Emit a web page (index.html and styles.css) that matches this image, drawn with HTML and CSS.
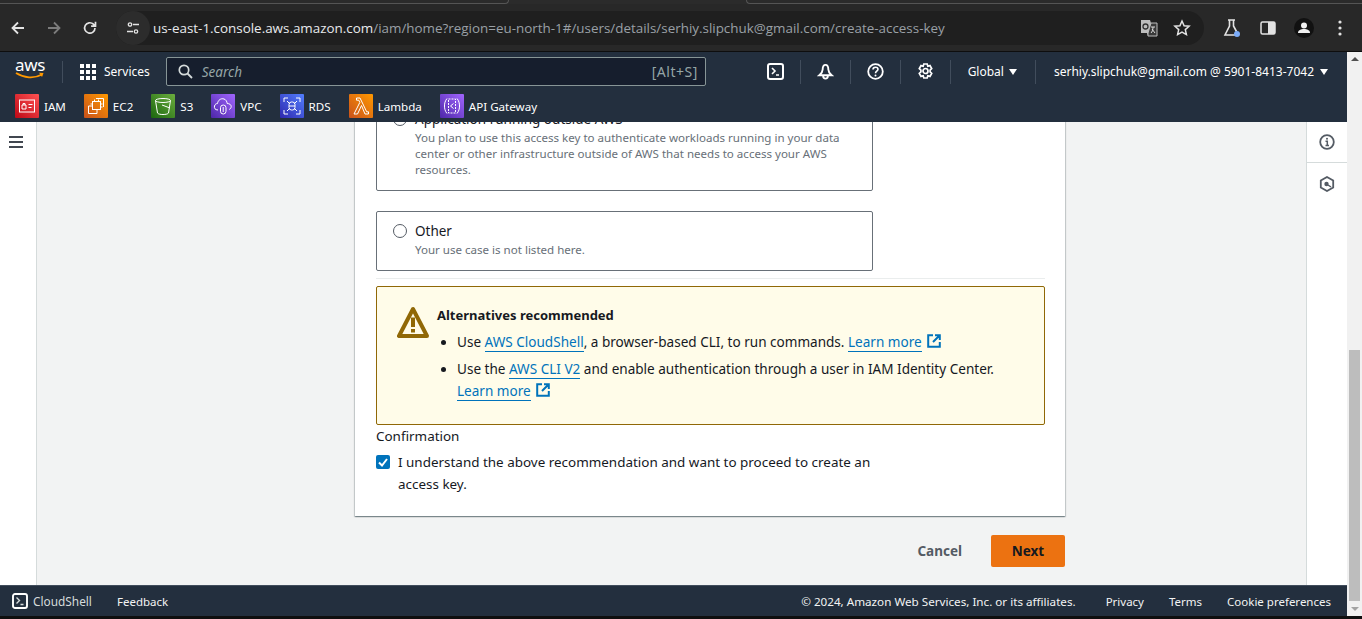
FILE: index.html
```html
<!DOCTYPE html>
<html lang="en">
<head>
  <meta charset="UTF-8">
  <title>Create access key</title>
  <link rel="stylesheet" href="styles.css">
</head>
<body>
  <header class="browser">
    <div class="tab-strip">
      <div class="tab-left"></div>
      <div class="tab-active"></div>
      <div class="tab-right"></div>
    </div>
    <div class="toolbar">
      <svg width="16" height="16" viewBox="0 0 16 16"><path d="M14 8H3M8 2.5 2.5 8 8 13.5" fill="none" stroke="#e3e3e3" stroke-width="1.8"/></svg>
      <svg width="16" height="16" viewBox="0 0 16 16"><path d="M2 8h11M8 2.5 13.5 8 8 13.5" fill="none" stroke="#7c7c7c" stroke-width="1.8"/></svg>
      <svg width="16" height="16" viewBox="0 0 16 16"><path d="M13 8a5.2 5.2 0 1 1-1.6-3.8L13 6M13.5 1.8V6.2H9.1" fill="none" stroke="#e3e3e3" stroke-width="1.7"/></svg>
      <div class="omnibox">
        <span class="site-chip">
          <svg width="16" height="16" viewBox="0 0 16 16"><g fill="none" stroke="#e3e3e3" stroke-width="1.3"><circle cx="5" cy="4.5" r="1.7"/><path d="M8 4.5h6M2 11.500h6"/><circle cx="11" cy="11.5" r="1.7"/></g></svg>
        </span>
        <span class="url"><b>us-east-1.console.aws.amazon.com</b>/iam/home?region=eu-north-1#/users/details/serhiy.slipchuk@gmail.com/create-access-key</span>
        <svg class="translate" width="18" height="18" viewBox="0 0 18 18"><path d="M1 1h9l1 3h6v13H8l-1-3H1z" fill="#bdbdbd"/><path d="M8 14l3-10h6v13H8z" fill="#3a3a3a" stroke="#bdbdbd"/><circle cx="5.5" cy="7.5" r="2.5" fill="none" stroke="#333" stroke-width="1.3"/><path d="M11 8h4M13 8c0 3-1 5-2 6M12 10l3 4" fill="none" stroke="#ddd"/></svg>
        <svg width="18" height="18" viewBox="0 0 18 18"><path d="M9 2l2.100 4.700 5 .5-3.800 3.400 1.100 5L9 13l-4.400 2.600 1.100-5L1.900 7.200l5-.5z" fill="none" stroke="#e3e3e3" stroke-width="1.5"/></svg>
      </div>
      <div class="tb-right">
        <svg width="18" height="20" viewBox="0 0 18 20"><path d="M5 2h7M6.500 2v6L2 17h11M10.500 2v6l3 5.500" fill="none" stroke="#e3e3e3" stroke-width="1.6"/><circle cx="14" cy="16" r="3" fill="#7cacf8"/></svg>
        <svg width="16" height="16" viewBox="0 0 16 16"><rect x="1" y="2" width="14" height="12" rx="1.5" fill="none" stroke="#e3e3e3" stroke-width="1.5"/><rect x="8" y="2" width="7" height="12" fill="#e3e3e3"/></svg>
        <svg width="24" height="24" viewBox="0 0 24 24"><circle cx="12" cy="12" r="10" fill="#111"/><circle cx="12" cy="9.5" r="3" fill="#f0f0f0"/><path d="M6 17c0-3 3-4 6-4s6 1 6 4z" fill="#f0f0f0"/></svg>
        <svg width="4" height="16" viewBox="0 0 4 16"><circle cx="2" cy="2" r="1.6" fill="#e3e3e3"/><circle cx="2" cy="8" r="1.6" fill="#e3e3e3"/><circle cx="2" cy="14" r="1.6" fill="#e3e3e3"/></svg>
      </div>
    </div>
  </header>

  <div class="viewport">
    <div class="page">
      <nav class="topnav">
        <div class="nav-row">
          <div class="aws-logo">
            <span class="aws-word">aws</span>
            <svg width="30" height="8" viewBox="0 0 30 8"><path d="M1 1c8 5 18 6 26 1.500" fill="none" stroke="#f90" stroke-width="1.8"/><path d="M24 .8l4.500 .2-1.500 4z" fill="#f90"/></svg>
          </div>
          <span class="nav-sep"></span>
          <div class="services">
            <svg width="16" height="16" viewBox="0 0 16 16" fill="#fff"><rect width="4" height="4"/><rect x="6" width="4" height="4"/><rect x="12" width="4" height="4"/><rect y="6" width="4" height="4"/><rect x="6" y="6" width="4" height="4"/><rect x="12" y="6" width="4" height="4"/><rect y="12" width="4" height="4"/><rect x="6" y="12" width="4" height="4"/><rect x="12" y="12" width="4" height="4"/></svg>
            <span>Services</span>
          </div>
          <div class="search">
            <svg width="15" height="15" viewBox="0 0 15 15"><circle cx="6" cy="6" r="4.7" fill="none" stroke="#d5dbdb" stroke-width="1.7"/><path d="M9.500 9.500l4.500 4.500" stroke="#d5dbdb" stroke-width="1.8"/></svg>
            <span class="search-text">Search</span>
            <span class="search-key">[Alt+S]</span>
          </div>
          <div class="nav-tools">
            <span class="tool">
              <svg width="17" height="17" viewBox="0 0 17 17"><rect x="1" y="1" width="15" height="15" rx="2" fill="none" stroke="#fff" stroke-width="2"/><path d="M5 5l3 3-3 3M9 12h3" fill="none" stroke="#fff" stroke-width="1.6"/></svg>
            </span>
            <span class="tool">
              <svg width="17" height="17" viewBox="0 0 18 18"><path d="M9 2C6.500 2 6 5 6 7c0 3-3.500 6-3.500 6h13S12 10 12 7c0-2-.5-5-3-5zM6.500 13.500c0 2 1 3 2.500 3s2.500-1 2.500-3" fill="none" stroke="#fff" stroke-width="2"/></svg>
            </span>
            <span class="tool">
              <svg width="17" height="17" viewBox="0 0 17 17"><circle cx="8.5" cy="8.5" r="7.3" fill="none" stroke="#fff" stroke-width="1.8"/><path d="M6 6.500c0-1.500 1.200-2.300 2.500-2.300S11 5 11 6.300c0 1.900-2.500 2-2.500 4" fill="none" stroke="#fff" stroke-width="1.6"/><circle cx="8.5" cy="12.5" r="1" fill="#fff"/></svg>
            </span>
            <span class="tool">
              <svg width="17" height="17" viewBox="0 0 17 17"><path d="M6.800 1h3.400l.6 2.200 2.200-.6 1.700 3-1.600 1.600v1.600l1.600 1.600-1.700 3-2.200-.6-.6 2.200H6.800l-.6-2.200-2.200.6-1.700-3 1.600-1.600V7.200L2.300 5.600l1.700-3 2.200.6z" fill="none" stroke="#fff" stroke-width="1.7"/><circle cx="8.5" cy="8" r="2.5" fill="none" stroke="#fff" stroke-width="1.7"/></svg>
            </span>
            <span class="tool tool-text">Global <i class="caret"></i></span>
            <span class="tool tool-text tool-last">serhiy.slipchuk@gmail.com @ 5901-8413-7042 <i class="caret"></i></span>
          </div>
        </div>
        <div class="shortcuts">
          <a class="shortcut"><span class="tile tile-red"><svg viewBox="0 0 24 24"><rect x="4.5" y="6" width="15" height="12" fill="none" stroke="#fff"/><path d="M7 11h4v4H7zM8 11V9.500h2V11M13.500 10.500h4M13.500 13.500h3" fill="none" stroke="#fff"/></svg></span>IAM</a>
          <a class="shortcut"><span class="tile tile-orange"><svg viewBox="0 0 24 24"><rect x="8.500" y="7.500" width="8" height="8" fill="none" stroke="#fff"/><path d="M12 4.500h7.500V13M8.500 12H4.500v7.500H13v-4M10.500 7.500V5.500M14.500 7.500V5.500M16.500 10h2M16.500 13h2M6.500 10h2" fill="none" stroke="#fff"/></svg></span>EC2</a>
          <a class="shortcut"><span class="tile tile-green"><svg viewBox="0 0 24 24"><ellipse cx="12" cy="6.5" rx="7.5" ry="2" fill="none" stroke="#fff"/><path d="M4.500 6.500 6.500 19c1 2 10 2 11 0l2-12.500M11 11l8 3" fill="none" stroke="#fff"/></svg></span>S3</a>
          <a class="shortcut"><span class="tile tile-purple"><svg viewBox="0 0 24 24"><path d="M7 16c-3 0-4-2-3.500-4C4 10 5.500 9.500 6.500 9.500 7 6 10 4 13 5c2 .7 3 2.500 3.200 4.500 2 0 4 1 4 3 0 1.500-1 2.500-2 3" fill="none" stroke="#fff"/><rect x="9.500" y="11" width="5.500" height="9" rx="2.700" fill="none" stroke="#fff"/><path d="M12.200 13v5" stroke="#fff"/></svg></span>VPC</a>
          <a class="shortcut"><span class="tile tile-blue"><svg viewBox="0 0 24 24"><path d="M4 8V4h4M16 4h4v4M4 16v4h4M20 16v4h-4M7 7l3 3M17 7l-3 3M7 17l3-3M17 17l-3-3" fill="none" stroke="#fff"/><rect x="9" y="8" width="6" height="8" rx="2.500" fill="none" stroke="#fff"/><path d="M9 12h6" stroke="#fff"/></svg></span>RDS</a>
          <a class="shortcut"><span class="tile tile-orange"><svg viewBox="0 0 24 24"><path d="M5 20h3.500l4-8.500L16 20h3.500v-2.200h-1.800L11 4H7.500v2.200h2.300l1 2.300z" fill="none" stroke="#fff"/></svg></span>Lambda</a>
          <a class="shortcut"><span class="tile tile-purple"><svg viewBox="0 0 24 24"><path d="M7 4.500C5 7 4.500 9.500 4.500 12s.5 5 2.500 7.500M17 4.500c2 2.500 2.500 5 2.500 7.500s-.5 5-2.500 7.500" fill="none" stroke="#fff"/><rect x="8.500" y="5" width="7" height="14" fill="none" stroke="#fff" stroke-dasharray="2 1"/><path d="M13.500 9.500 10.500 12l3 2.500" fill="none" stroke="#fff"/></svg></span>API Gateway</a>
        </div>
      </nav>

      <div class="app">
        <aside class="side-left">
          <svg width="14" height="12" viewBox="0 0 14 12"><path d="M0 1h14M0 6h14M0 11h14" stroke="#414750" stroke-width="1.8"/></svg>
        </aside>

        <main class="main">
          <section class="card">
            <div class="option">
              <span class="radio"></span>
              <div>
                <div class="opt-title">Application running outside AWS</div>
                <p class="opt-desc">You plan to use this access key to authenticate workloads running in your data center or other infrastructure outside of AWS that needs to access your AWS resources.</p>
              </div>
            </div>
            <div class="option">
              <span class="radio"></span>
              <div>
                <div class="opt-title">Other</div>
                <p class="opt-desc">Your use case is not listed here.</p>
              </div>
            </div>
            <hr class="divider">
            <div class="alert">
              <svg class="alert-icon" width="32" height="32" viewBox="0 0 32 32"><path d="M16 3 2 30h28z" fill="none" stroke="#906806" stroke-width="4" stroke-linejoin="round"/><path d="M14 11.500h4v9.500h-4zM14 23h4v3.500h-4z" fill="#906806"/></svg>
              <div class="alert-body">
                <div class="alert-title">Alternatives recommended</div>
                <ul>
                  <li>Use <a class="link">AWS CloudShell</a>, a browser-based CLI, to run commands. <span class="learn"><a class="link">Learn more</a><svg class="ext" width="14" height="14" viewBox="0 0 14 14"><path d="M6 1.200H1.200v11.600h11.600V8M8 1.200h4.800V6M12.500 1.500 6 8" fill="none" stroke="#0073bb" stroke-width="2"/></svg></span></li>
                  <li>Use the <a class="link">AWS CLI V2</a> and enable authentication through a user in IAM Identity Center. <span class="learn"><a class="link">Learn more</a><svg class="ext" width="14" height="14" viewBox="0 0 14 14"><path d="M6 1.200H1.200v11.600h11.600V8M8 1.200h4.800V6M12.500 1.500 6 8" fill="none" stroke="#0073bb" stroke-width="2"/></svg></span></li>
                </ul>
              </div>
            </div>
            <div class="confirm-label">Confirmation</div>
            <div class="confirm">
              <span class="check"><svg width="14" height="14" viewBox="0 0 14 14"><path d="M3 7.500l3 3 5-6.500" fill="none" stroke="#fff" stroke-width="2"/></svg></span>
              <span class="confirm-text">I understand the above recommendation and want to proceed to create an access key.</span>
            </div>
          </section>
          <div class="actions">
            <a class="btn-cancel">Cancel</a>
            <a class="btn-next">Next</a>
          </div>
        </main>

        <aside class="side-right">
          <div class="rail-item">
            <svg width="16" height="16" viewBox="0 0 16 16"><circle cx="8" cy="8" r="6.800" fill="none" stroke="#545b64" stroke-width="1.8"/><path d="M6.500 7.200H8.300V11.500M6.500 11.500h3.500" fill="none" stroke="#545b64" stroke-width="1.5"/><circle cx="8" cy="4.800" r="1" fill="#545b64"/></svg>
          </div>
          <div class="rail-item">
            <svg width="16" height="16" viewBox="0 0 16 16"><path d="M8 1l6.200 3.500v7L8 15l-6.200-3.500v-7z" fill="none" stroke="#545b64" stroke-width="1.8"/><circle cx="7.5" cy="8" r="2.200" fill="#545b64"/><path d="M9 9l3 2" stroke="#545b64" stroke-width="1.5"/></svg>
          </div>
        </aside>
      </div>

      <footer class="footer">
        <div class="foot-left">
          <svg width="16" height="16" viewBox="0 0 16 16"><rect x="1" y="1" width="14" height="14" rx="2" fill="none" stroke="#fff" stroke-width="1.9"/><path d="M4.500 4.500l3 3-3 3M8.500 11.500h3" fill="none" stroke="#d5dbdb" stroke-width="1.4"/></svg>
          <span class="foot-shell">CloudShell</span>
          <span class="foot-feedback">Feedback</span>
        </div>
        <div class="foot-right">
          <span class="foot-copy">© 2024, Amazon Web Services, Inc. or its affiliates.</span>
          <span>Privacy</span>
          <span>Terms</span>
          <span>Cookie preferences</span>
        </div>
      </footer>
    </div>

    <div class="scrollbar">
      <i class="arrow-up"></i>
      <div class="track"><div class="thumb"></div></div>
      <i class="arrow-down"></i>
    </div>
  </div>
  <div class="bottom-edge"></div>
</body>
</html>
```

FILE: styles.css
```css
*, *::before, *::after {
  box-sizing: border-box;
  margin: 0;
  padding: 0;
}

html, body {
  height: 619px;
  overflow: hidden;
}

body {
  display: flex;
  flex-direction: column;
  font-family: "Noto Sans", "Open Sans", sans-serif;
  font-size: 14px;
  background: #0f0f0f;
  color: #16191f;
}

/* browser chrome */
.browser {
  flex: 0 0 52px;
  background: #282828;
  border-bottom: 1px solid #0e0e0e;
}

.tab-strip {
  display: flex;
  height: 4px;
  background: #2b2b2b;
}

.tab-left, .tab-right {
  border-bottom: 1px solid #555;
}

.tab-left {
  width: 509px;
  border-radius: 0 0 8px 0;
  border-right: 1px solid #555;
}

.tab-active {
  width: 237px;
}

.tab-right {
  flex: 1;
  border-radius: 0 0 0 8px;
  border-left: 1px solid #555;
}

.toolbar {
  display: flex;
  align-items: center;
  gap: 20px;
  height: 47px;
  padding: 0 4px 0 10px;
}

.omnibox {
  flex: 1;
  display: flex;
  align-items: center;
  height: 34px;
  margin-left: -2px;
  padding-right: 13px;
  border-radius: 17px;
  background: #1f1f1f;
}

.site-chip {
  flex: 0 0 34px;
  display: flex;
  align-items: center;
  justify-content: center;
  height: 34px;
  margin-right: 3px;
  border-radius: 50%;
  background: #2c2c2c;
}

.url {
  flex: 1;
  font-family: "Open Sans", sans-serif;
  font-size: 13.42px;
  color: #9aa0a6;
  white-space: nowrap;
}

.url b {
  font-weight: 400;
  color: #e8eaed;
}

.translate {
  margin-right: 15px;
}

.tb-right {
  display: grid;
  grid-template-columns: repeat(4, 36px);
  justify-items: center;
  align-items: center;
  margin-left: -10px;
}

/* aws top nav */
.viewport {
  flex: 0 0 564px;
  display: flex;
  min-height: 0;
  overflow: hidden;
}

.page {
  flex: 1;
  display: flex;
  flex-direction: column;
  min-width: 0;
  min-height: 0;
  background: #fff;
}

.topnav {
  flex: 0 0 70px;
  background: #232f3e;
  color: #fff;
  font-size: 12px;
}

.nav-row {
  display: flex;
  align-items: center;
  height: 39px;
  padding: 0 19px 0 15px;
}

.aws-logo {
  display: flex;
  flex-direction: column;
  align-items: center;
  width: 30px;
  line-height: 12px;
  margin-top: -4px;
}

.aws-word {
  font-size: 17px;
  letter-spacing: -0.3px;
}

.aws-logo svg {
  margin-top: 1px;
}

.nav-sep {
  width: 1px;
  height: 22px;
  margin: 0 17px;
  background: #414d5c;
}

.services {
  display: flex;
  align-items: center;
  gap: 8px;
  margin-right: 16px;
}

.search {
  display: flex;
  align-items: center;
  width: 540px;
  height: 29px;
  padding: 0 7px 0 11px;
  background: #161e2d;
  border: 1px solid #879596;
  border-radius: 2px;
  color: #95a5a6;
}

.search-text {
  flex: 1;
  margin-left: 9px;
  font-style: italic;
  font-size: 13.5px;
}

.search-key {
  font-size: 14px;
  letter-spacing: 0.5px;
}

.nav-tools {
  flex: 1;
  display: flex;
  align-items: center;
  justify-content: flex-end;
}

.tool {
  display: flex;
  align-items: center;
  height: 24px;
  padding: 0 16px;
  border-right: 1px solid #414d5c;
}

.tool-text {
  gap: 5px;
  padding: 0 18px 0 17px;
  font-size: 12px;
}

.tool-last {
  gap: 6px;
  padding: 0 0 0 18px;
  border-right: none;
}

.caret {
  width: 0;
  height: 0;
  border-left: 4.5px solid transparent;
  border-right: 4.5px solid transparent;
  border-top: 6px solid #fff;
}

.shortcuts {
  display: flex;
  align-items: center;
  gap: 18px;
  height: 31px;
  padding: 0 15px 1px;
}

.shortcut {
  display: flex;
  align-items: center;
  gap: 5px;
  font-size: 11.6px;
  white-space: nowrap;
}

.tile {
  width: 24px;
  height: 24px;
  border-radius: 1px;
}

.tile svg {
  display: block;
  width: 24px;
  height: 24px;
}

.tile-red { background: linear-gradient(45deg, #bd0816, #ff5252); }
.tile-orange { background: linear-gradient(45deg, #c8511b, #f90); }
.tile-green { background: linear-gradient(45deg, #1b660f, #6cae3e); }
.tile-purple { background: linear-gradient(45deg, #4d27a8, #a166ff); }
.tile-blue { background: linear-gradient(45deg, #2e27ad, #527fff); }

/* page body */
.app {
  flex: 1;
  display: flex;
  min-height: 0;
}

.side-left {
  flex: 0 0 37px;
  padding: 14px 0 0 9px;
  background: #fff;
  border-right: 1px solid #d5dbdb;
}

.side-left svg {
  display: block;
}

.main {
  flex: 1;
  display: flex;
  flex-direction: column;
  justify-content: flex-end;
  align-items: center;
  min-height: 0;
  overflow: hidden;
  padding: 0 0 18px 77px;
  background: #f2f3f3;
}

.card {
  flex-shrink: 0;
  width: 710px;
  padding: 0 20px 21px 21px;
  background: #fff;
  box-shadow: 0 1px 1px 0 rgba(0, 28, 36, 0.3), 1px 1px 1px 0 rgba(0, 28, 36, 0.15), -1px 1px 1px 0 rgba(0, 28, 36, 0.15);
}

.option {
  display: flex;
  gap: 8px;
  width: 497px;
  padding: 10px 16px 12px;
  margin-bottom: 20px;
  border: 1px solid #687078;
  border-radius: 2px;
}

.radio {
  flex: 0 0 14px;
  width: 14px;
  height: 14px;
  margin-top: 2px;
  border: 1px solid #545b64;
  border-radius: 50%;
  background: #fff;
}

.opt-title {
  font-size: 13.5px;
  line-height: 18px;
}

.opt-desc {
  margin-top: 2px;
  font-size: 11.55px;
  line-height: 16px;
  color: #687078;
}

.divider {
  border: none;
  border-top: 1px solid #eaeded;
  margin: -13px 0 7px;
}

.alert {
  display: flex;
  gap: 8px;
  height: 139px;
  padding: 16px 20px 0 20px;
  background: #fffce9;
  border: 1px solid #906806;
  border-radius: 2px;
}

.alert-icon {
  flex-shrink: 0;
  margin-top: 3px;
}

.alert-body {
  flex: 1;
  font-size: 13.55px;
  line-height: 22px;
}

.alert-title {
  font-size: 13px;
  font-weight: 700;
  line-height: 24px;
  margin-bottom: 4px;
}

.alert-body ul {
  padding-left: 20px;
}

.alert-body li {
  margin-bottom: 5px;
}

.learn {
  white-space: nowrap;
}

.link {
  color: #0073bb;
  border-bottom: 1px solid #0073bb;
}

.ext {
  margin-left: 5px;
  vertical-align: -1px;
}

.confirm-label {
  margin-top: 2px;
  font-size: 13.45px;
  line-height: 18px;
}

.confirm {
  display: flex;
  gap: 8px;
  width: 497px;
  margin-top: 6px;
}

.check {
  flex: 0 0 14px;
  height: 14px;
  margin-top: 4px;
  background: #0073bb;
  border-radius: 2px;
}

.check svg {
  display: block;
}

.confirm-text {
  font-size: 13.45px;
  line-height: 22px;
}

.actions {
  flex-shrink: 0;
  display: flex;
  align-items: center;
  justify-content: flex-end;
  gap: 29px;
  width: 710px;
  margin-top: 19px;
}

.btn-cancel {
  font-size: 13.5px;
  font-weight: 700;
  color: #545b64;
}

.btn-next {
  display: flex;
  align-items: center;
  justify-content: center;
  width: 74px;
  height: 32px;
  font-size: 13.5px;
  font-weight: 700;
  color: #16191f;
  background: #ec7211;
  border-radius: 2px;
}

.side-right {
  flex: 0 0 41px;
  background: #fff;
  border-left: 1px solid #d5dbdb;
}

.rail-item {
  display: flex;
  align-items: center;
  justify-content: center;
  height: 41px;
  border-bottom: 1px solid #d5dbdb;
}

.rail-item:last-child {
  border-bottom: none;
}

/* footer */
.footer {
  flex: 0 0 31px;
  display: flex;
  align-items: center;
  justify-content: space-between;
  padding: 0 16px 0 12px;
  background: #232f3e;
  border-top: 1px solid #414d5c;
  color: #f2f3f3;
  font-size: 11.5px;
}

.foot-left, .foot-right {
  display: flex;
  align-items: center;
}

.foot-shell {
  margin-left: 5px;
  font-size: 11.85px;
  color: #d5dbdb;
}

.foot-feedback {
  margin-left: 25px;
}

.foot-right {
  gap: 25px;
}

.foot-copy {
  margin-right: 5px;
  font-size: 11.67px;
}

/* scrollbar */
.scrollbar {
  flex: 0 0 15px;
  display: flex;
  flex-direction: column;
  align-items: center;
  padding: 5px 0;
  background: #f1f1f1;
}

.track {
  flex: 1;
  width: 100%;
  display: flex;
  flex-direction: column;
  justify-content: flex-end;
  padding: 0 2px 6px 2px;
}

.thumb {
  height: 251px;
  background: #bdbdbd;
}

.arrow-up, .arrow-down {
  width: 0;
  height: 0;
  border-left: 4px solid transparent;
  border-right: 4px solid transparent;
}

.arrow-up {
  border-bottom: 4px solid #505050;
}

.arrow-down {
  border-top: 4px solid #a3a3a3;
}

.bottom-edge {
  flex: 1;
  background: #0f0f0f;
}
```
